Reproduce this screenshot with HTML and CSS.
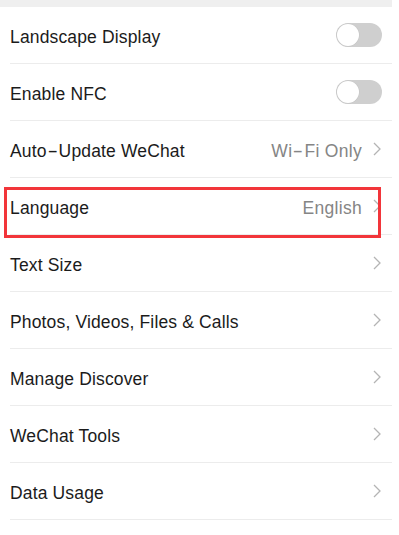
FILE: index.html
```html
<!DOCTYPE html>
<html>
<head>
<meta charset="utf-8">
<link rel="stylesheet" href="styles.css">
</head>
<body>
<div class="page">
  <div class="topband"></div>
  <ul class="list">
    <li class="row"><span class="label">Landscape Display</span><span class="toggle"><span class="knob"></span></span></li>
    <li class="row"><span class="label">Enable NFC</span><span class="toggle"><span class="knob"></span></span></li>
    <li class="row"><span class="label">Auto<span class="dash">-</span>Update WeChat</span><span class="right"><span class="value">Wi<span class="dash">-</span>Fi Only</span><svg class="chev" viewBox="0 0 8 14" width="8" height="14"><path d="M1 1 L7 7 L1 13" fill="none" stroke="#b4b4b4" stroke-width="1.3"/></svg></span></li>
    <li class="row highlight"><span class="label">Language</span><span class="right"><span class="value">English</span><svg class="chev" viewBox="0 0 8 14" width="8" height="14"><path d="M1 1 L7 7 L1 13" fill="none" stroke="#b4b4b4" stroke-width="1.3"/></svg></span><span class="redbox"></span></li>
    <li class="row"><span class="label">Text Size</span><span class="right"><svg class="chev" viewBox="0 0 8 14" width="8" height="14"><path d="M1 1 L7 7 L1 13" fill="none" stroke="#b4b4b4" stroke-width="1.3"/></svg></span></li>
    <li class="row"><span class="label">Photos, Videos, Files &amp; Calls</span><span class="right"><svg class="chev" viewBox="0 0 8 14" width="8" height="14"><path d="M1 1 L7 7 L1 13" fill="none" stroke="#b4b4b4" stroke-width="1.3"/></svg></span></li>
    <li class="row"><span class="label">Manage Discover</span><span class="right"><svg class="chev" viewBox="0 0 8 14" width="8" height="14"><path d="M1 1 L7 7 L1 13" fill="none" stroke="#b4b4b4" stroke-width="1.3"/></svg></span></li>
    <li class="row"><span class="label">WeChat Tools</span><span class="right"><svg class="chev" viewBox="0 0 8 14" width="8" height="14"><path d="M1 1 L7 7 L1 13" fill="none" stroke="#b4b4b4" stroke-width="1.3"/></svg></span></li>
    <li class="row"><span class="label">Data Usage</span><span class="right"><svg class="chev" viewBox="0 0 8 14" width="8" height="14"><path d="M1 1 L7 7 L1 13" fill="none" stroke="#b4b4b4" stroke-width="1.3"/></svg></span></li>
  </ul>
</div>
</body>
</html>
```
FILE: styles.css
```css
html, body {
  margin: 0;
  padding: 0;
  background: #ffffff;
}
body {
  font-family: "Liberation Sans", Arial, sans-serif;
  color: #1b1b1b;
  width: 399px;
  height: 535px;
  overflow: hidden;
}
.page {
  width: 392px;
}
.topband {
  height: 7px;
  background: #efefef;
}
.list {
  list-style: none;
  margin: 0;
  padding: 0 0 0 10px;
}
.row {
  position: relative;
  height: 56px;
  border-bottom: 1px solid #ececec;
  display: flex;
  align-items: center;
  justify-content: space-between;
  padding-right: 10px;
  font-size: 17.5px;
}
.label {
  letter-spacing: 0.15px;
  padding-top: 4px;
}
.dash {
  display: inline-block;
  transform: scaleX(1.8);
  margin: 0 3px;
}
.right {
  display: flex;
  align-items: center;
  gap: 11px;
}
.value {
  color: #858585;
  padding-top: 4px;
  letter-spacing: 0.3px;
}
.chev {
  display: block;
  margin-right: 1px;
}
.toggle {
  width: 46px;
  height: 24px;
  border-radius: 12px;
  background: #cfcfcf;
  position: relative;
}
.knob {
  position: absolute;
  left: 1px;
  top: 1px;
  width: 22px;
  height: 22px;
  border-radius: 50%;
  background: #ffffff;
  box-shadow: 0 0 0 0.5px #c4c4c4;
}
.redbox {
  position: absolute;
  left: -6px;
  top: 9px;
  width: 377px;
  height: 51px;
  border: 3px solid #f2353a;
  box-sizing: border-box;
  pointer-events: none;
  z-index: 1;
}
```
